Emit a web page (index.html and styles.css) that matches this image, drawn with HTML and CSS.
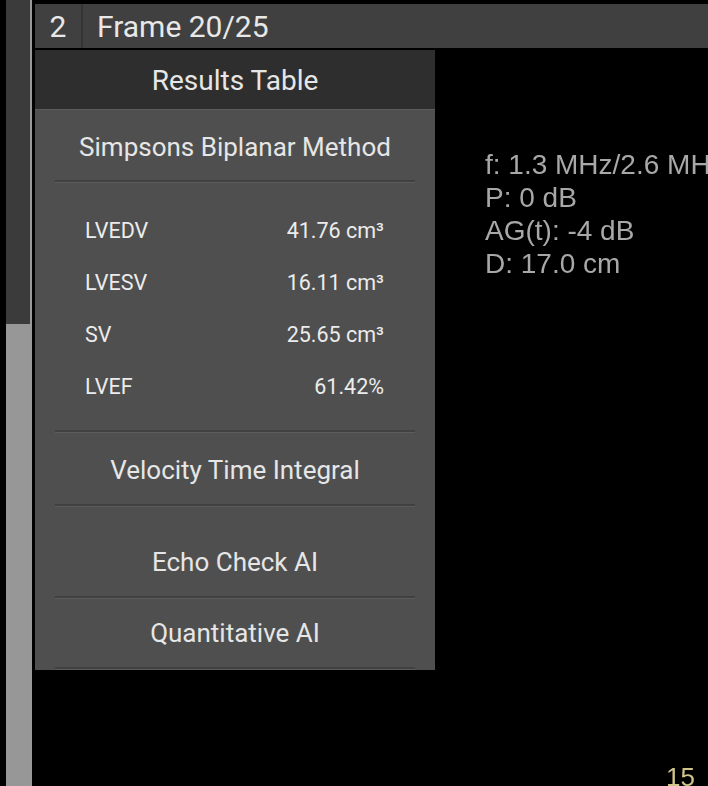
FILE: index.html
```html
<!DOCTYPE html>
<html lang="en">
<head>
  <meta charset="UTF-8" />
  <meta name="viewport" content="width=device-width, initial-scale=1.0"/>
  <title>Echo Viewer - Results</title>
  <link rel="stylesheet" href="styles.css">
</head>
<body>
  <div class="app">
    <div class="scrollbar">
      <div class="scroll-thumb"></div>
      <div class="scroll-track"></div>
    </div>

    <div class="viewer">
      <div class="viewer-bar">
        <span class="viewer-index">2</span>
        <span class="viewer-title">Frame 20/25</span>
      </div>

      <div class="viewport">
        <div class="results-panel">
          <div class="results-head">Results Table</div>
          <div class="results-body">
            <div class="section section-simpsons">Simpsons Biplanar Method</div>
            <div class="divider"></div>

            <div class="measures">
              <div class="measure"><span>LVEDV</span><span>41.76 cm³</span></div>
              <div class="measure"><span>LVESV</span><span>16.11 cm³</span></div>
              <div class="measure"><span>SV</span><span>25.65 cm³</span></div>
              <div class="measure"><span>LVEF</span><span>61.42%</span></div>
            </div>
            <div class="divider"></div>

            <div class="section section-vti">Velocity Time Integral</div>
            <div class="divider"></div>

            <div class="section section-echo">Echo Check AI</div>
            <div class="divider"></div>

            <div class="section section-quant">Quantitative AI</div>
            <div class="divider"></div>
          </div>
        </div>

        <!-- scanner readout drawn over the image -->
        <div class="scan-info">
          <div>f: 1.3 MHz/2.6 MHz</div>
          <div>P: 0 dB</div>
          <div>AG(t): -4 dB</div>
          <div>D: 17.0 cm</div>
        </div>
        <div class="scale-label">15</div>
      </div>
    </div>
  </div>
</body>
</html>
```

FILE: styles.css
```css
html, body {
  margin: 0;
  height: 100%;
  background: #000;
  overflow: hidden;
}

body {
  font-family: Roboto, "Noto Sans", sans-serif;
  color: #e6e6e6;
}

.app {
  display: flex;
  height: 100%;
}

.scrollbar {
  display: flex;
  flex-direction: column;
  width: 24px;
  margin-left: 6px;
  border-right: 2px solid #999;
}

.scroll-thumb {
  height: 324px;
  background: #3b3b3b;
}

.scroll-track {
  flex: 1;
  background: #979797;
}

.viewer {
  flex: 1;
  margin-left: 3px;
  display: flex;
  flex-direction: column;
  min-width: 0;
}

.viewer-bar {
  display: flex;
  align-items: center;
  height: 44px;
  margin-top: 4px;
  background: #404040;
  font-size: 30px;
  color: #e8e8e8;
}

.viewer-index {
  width: 46px;
  height: 100%;
  display: flex;
  align-items: center;
  justify-content: center;
  border-right: 2px solid #343434;
}

.viewer-title {
  padding-left: 14px;
}

.viewport {
  position: relative;
  flex: 1;
}

.results-panel {
  width: 400px;
  margin-top: 2px;
  background: #4f4f4f;
}

.results-head {
  height: 60px;
  display: flex;
  align-items: center;
  justify-content: center;
  background: #2e2e2e;
  border-bottom: 1px solid #5c5c5c;
  font-size: 28px;
  padding-top: 1px;
  box-sizing: border-box;
}

.results-body {
  padding: 0 20px;
}

.section {
  display: flex;
  align-items: center;
  justify-content: center;
  box-sizing: border-box;
  font-size: 26px;
}

.section-simpsons {
  height: 70px;
  padding-top: 4px;
}

.section-vti {
  height: 71px;
  padding-top: 2px;
}

.section-echo {
  height: 89px;
  padding-top: 20px;
}

.section-quant {
  height: 68px;
}

.divider {
  height: 2px;
  background: #414141;
  border-bottom: 1px solid #5c5c5c;
}

.measures {
  padding: 21px 31px 18px 30px;
  font-size: 21.5px;
  color: #ececec;
}

.measure {
  height: 52px;
  display: flex;
  align-items: center;
  justify-content: space-between;
}

.scan-info {
  position: absolute;
  left: 450px;
  top: 100px;
  font-family: "Liberation Sans", Arial, sans-serif;
  font-size: 28px;
  line-height: 33px;
  color: #a8a8a8;
  white-space: nowrap;
  filter: blur(0.4px);
}

.scale-label {
  position: absolute;
  left: 631px;
  top: 714px;
  font-family: "Liberation Sans", Arial, sans-serif;
  font-size: 26px;
  line-height: 30px;
  color: #cfc48a;
  filter: blur(0.4px);
}
```
